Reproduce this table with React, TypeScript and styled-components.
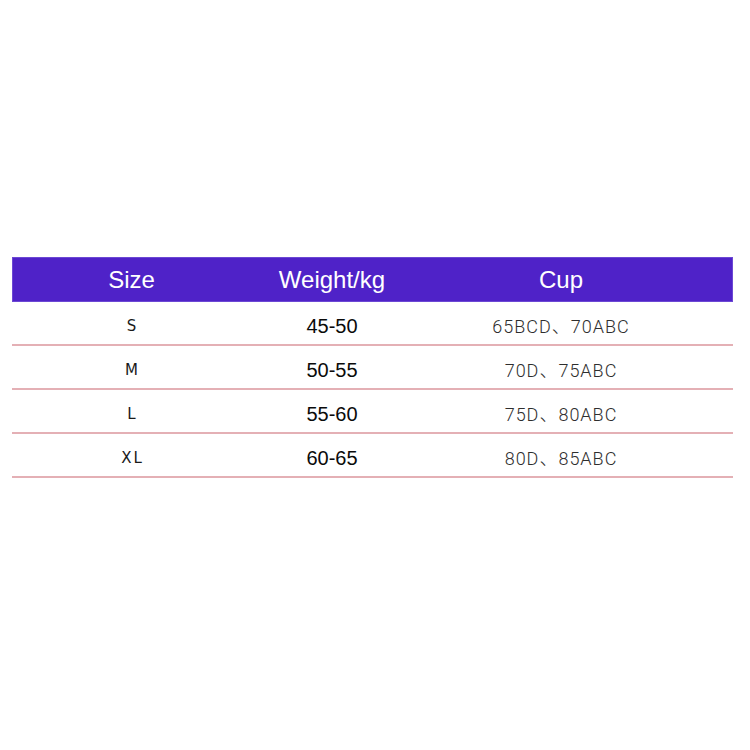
import React from 'react';
import styled, { createGlobalStyle } from 'styled-components';

interface SizeRow {
	size: string;
	weight: string;
	cup: string;
}

const rows: SizeRow[] = [
	{ size: 'S', weight: '45-50', cup: '65BCD、70ABC' },
	{ size: 'M', weight: '50-55', cup: '70D、75ABC' },
	{ size: 'L', weight: '55-60', cup: '75D、80ABC' },
	{ size: 'XL', weight: '60-65', cup: '80D、85ABC' },
];

const GlobalStyle = createGlobalStyle`
	html, body {
		margin: 0;
		padding: 0;
		background: #ffffff;
	}
	body {
		width: 750px;
		height: 750px;
		font-family: "Liberation Sans", Arial, sans-serif;
	}
`;

const Page = styled.div`
	padding: 257px 17px 0 12px;
`;

const Table = styled.div`
	width: 721px;
`;

const HeaderRow = styled.div`
	display: grid;
	grid-template-columns: 239px 162px 1fr;
	height: 45px;
	background-color: #4f22c8;
	box-shadow: inset 0 0 0 1px #6c48d4;
	color: #ffffff;
	font-family: "Liberation Sans", Arial, sans-serif;
	font-size: 24px;
	align-items: center;
`;

const HeaderCell = styled.div<{ $trim?: boolean }>`
	text-align: center;
	padding-top: 1px;
	padding-right: ${props => (props.$trim ? '24px' : '0')};
`;

const BodyRow = styled.div`
	display: grid;
	grid-template-columns: 239px 162px 1fr;
	height: 42px;
	border-bottom: 2px solid #e4b0b5;
	align-items: center;
`;

const SizeCell = styled.div`
	text-align: center;
	font-family: "DejaVu Sans", sans-serif;
	font-size: 15px;
	letter-spacing: 2px;
	padding-left: 2px;
	color: #1a1a1a;
	padding-top: 6px;
`;

const WeightCell = styled.div`
	text-align: center;
	font-family: "Liberation Sans", Arial, sans-serif;
	font-size: 20px;
	color: #0a0a0a;
	padding-top: 7px;
`;

const CupCell = styled.div`
	text-align: center;
	font-family: Roboto, "Noto Sans CJK SC", sans-serif;
	font-weight: 300;
	font-size: 18px;
	letter-spacing: 1px;
	color: #2e2e2e;
	padding-right: 24px;
	padding-top: 3px;
`;

function App(): JSX.Element {
	return (
		<>
			<GlobalStyle />
			<Page>
				<Table>
					<HeaderRow>
						<HeaderCell>Size</HeaderCell>
						<HeaderCell>Weight/kg</HeaderCell>
						<HeaderCell $trim>Cup</HeaderCell>
					</HeaderRow>
					{rows.map(row => (
						<BodyRow key={row.size}>
							<SizeCell>{row.size}</SizeCell>
							<WeightCell>{row.weight}</WeightCell>
							<CupCell>{row.cup}</CupCell>
						</BodyRow>
					))}
				</Table>
			</Page>
		</>
	);
}

export default App;
